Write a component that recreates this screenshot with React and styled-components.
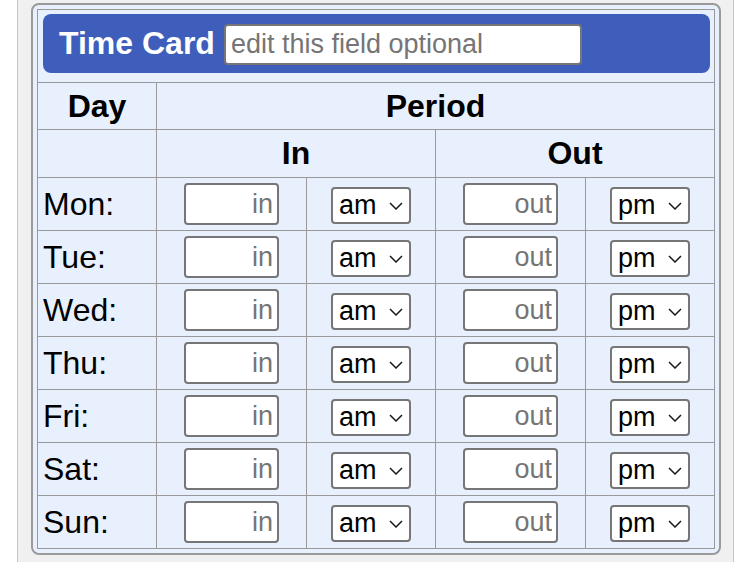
import React from "react";
import styled, { createGlobalStyle } from "styled-components";

const days = ["Mon", "Tue", "Wed", "Thu", "Fri", "Sat", "Sun"];

const GlobalStyle = createGlobalStyle`
  html, body {
    margin: 0;
    padding: 0;
    background: #fff;
  }
  body {
    font-family: "Liberation Sans", Arial, sans-serif;
  }
`;

const Page = styled.div`
  box-sizing: border-box;
  width: 717px;
  min-height: 100vh;
  margin-left: 17px;
  padding: 3px 12px 0 13px;
  background: #f0f0f0;
  border-left: 1px solid #c6c6c6;
  border-right: 1px solid #c6c6c6;
`;

const Card = styled.div`
  box-sizing: border-box;
  width: 690px;
  padding: 4px;
  border: 2px solid #9a9a9a;
  border-radius: 8px;
  background: #e8f0fe;
`;

const Sheet = styled.table`
  width: 678px;
  table-layout: fixed;
  border-collapse: collapse;
  border: 1px solid #999;
  font-size: 32px;
  color: #000;

  th,
  td {
    border: 1px solid #999;
    padding: 0;
    vertical-align: middle;
  }
`;

const TitleCell = styled.th`
  padding: 4px 4px 9px 5px !important;
`;

const TitleBar = styled.div`
  display: flex;
  align-items: center;
  gap: 9px;
  height: 59px;
  padding-left: 16px;
  background: #3f5ebb;
  border-radius: 8px;
`;

const TitleText = styled.span`
  font-size: 32px;
  font-weight: bold;
  color: #fff;
`;

const TitleInput = styled.input`
  box-sizing: border-box;
  width: 358px;
  height: 41px;
  margin-top: 1px;
  padding: 0 5px;
  border: 2px solid #767676;
  border-radius: 4px;
  background: #fff;
  font-family: inherit;
  font-size: 27px;

  &::placeholder {
    color: #757575;
  }
`;

const HeadCell = styled.th`
  height: ${({ $h }) => $h}px;
  font-weight: bold;
  text-align: center;
`;

const DayCell = styled.td`
  height: 52px;
  padding-left: 5px !important;
  text-align: left;
`;

const Cell = styled.td`
  text-align: center;
`;

const TimeInput = styled.input`
  box-sizing: border-box;
  width: 95px;
  height: 42px;
  padding: 0 4px;
  border: 2px solid #767676;
  border-radius: 4px;
  background: #fff;
  font-family: inherit;
  font-size: 27px;
  text-align: right;
  vertical-align: middle;

  &::placeholder {
    color: #757575;
  }
`;

const SelectBox = styled.span`
  position: relative;
  display: inline-block;
  vertical-align: middle;

  svg {
    position: absolute;
    top: 50%;
    right: 8px;
    margin-top: -3px;
    pointer-events: none;
  }
`;

const Select = styled.select`
  box-sizing: border-box;
  width: 80px;
  height: 37px;
  padding: 0 0 0 6px;
  border: 2px solid #767676;
  border-radius: 4px;
  background: #fff;
  color: #000;
  font-family: inherit;
  font-size: 27px;
  appearance: none;
  -webkit-appearance: none;
`;

const Chevron = () => (
  <svg width="14" height="8" viewBox="0 0 14 8">
    <path d="M1 1 L7 7 L13 1" fill="none" stroke="#1a1a1a" strokeWidth="1.5" />
  </svg>
);

const AmPm = ({ value }) => (
  <SelectBox>
    <Select defaultValue={value}>
      <option value="am">am</option>
      <option value="pm">pm</option>
    </Select>
    <Chevron />
  </SelectBox>
);

export default function App() {
  return (
    <>
      <GlobalStyle />
      <Page>
        <Card>
          <Sheet>
            <colgroup>
              <col style={{ width: 119 }} />
              <col style={{ width: 150 }} />
              <col style={{ width: 129 }} />
              <col style={{ width: 150 }} />
              <col style={{ width: 129 }} />
            </colgroup>
            <thead>
              <tr>
                <TitleCell colSpan={5}>
                  <TitleBar>
                    <TitleText>Time Card</TitleText>
                    <TitleInput placeholder="edit this field optional" />
                  </TitleBar>
                </TitleCell>
              </tr>
              <tr>
                <HeadCell $h={46}>Day</HeadCell>
                <HeadCell $h={46} colSpan={4}>
                  Period
                </HeadCell>
              </tr>
              <tr>
                <HeadCell $h={47} />
                <HeadCell $h={47} colSpan={2}>
                  In
                </HeadCell>
                <HeadCell $h={47} colSpan={2}>
                  Out
                </HeadCell>
              </tr>
            </thead>
            <tbody>
              {days.map((day) => (
                <tr key={day}>
                  <DayCell>{day}:</DayCell>
                  <Cell>
                    <TimeInput placeholder="in" />
                  </Cell>
                  <Cell>
                    <AmPm value="am" />
                  </Cell>
                  <Cell>
                    <TimeInput placeholder="out" />
                  </Cell>
                  <Cell>
                    <AmPm value="pm" />
                  </Cell>
                </tr>
              ))}
            </tbody>
          </Sheet>
        </Card>
      </Page>
    </>
  );
}
